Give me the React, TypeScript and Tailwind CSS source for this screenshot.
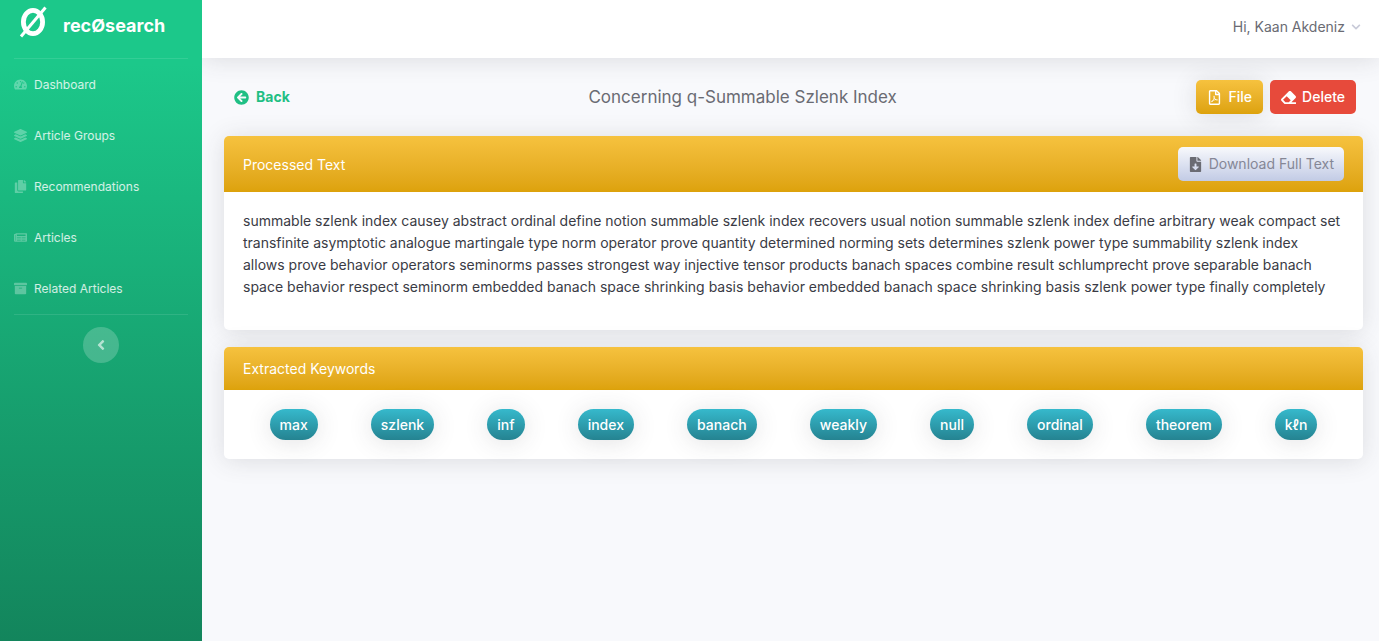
import React from 'react';
import {
  FaTachometerAlt,
  FaLayerGroup,
  FaCopy,
  FaNewspaper,
  FaArchive,
  FaAngleLeft,
  FaChevronDown,
  FaArrowCircleLeft,
  FaRegFilePdf,
  FaEraser,
  FaFileDownload,
} from 'react-icons/fa';

const navItems = [
  { label: 'Dashboard', icon: FaTachometerAlt },
  { label: 'Article Groups', icon: FaLayerGroup },
  { label: 'Recommendations', icon: FaCopy },
  { label: 'Articles', icon: FaNewspaper },
  { label: 'Related Articles', icon: FaArchive },
];

const keywords = ['max', 'szlenk', 'inf', 'index', 'banach', 'weakly', 'null', 'ordinal', 'theorem', 'kℓn'];

const processedText =
  'summable szlenk index causey abstract ordinal define notion summable szlenk index recovers usual notion summable szlenk index define arbitrary weak compact set transfinite asymptotic analogue martingale type norm operator prove quantity determined norming sets determines szlenk power type summability szlenk index allows prove behavior operators seminorms passes strongest way injective tensor products banach spaces combine result schlumprecht prove separable banach space behavior respect seminorm embedded banach space shrinking basis behavior embedded banach space shrinking basis szlenk power type finally completely';

function Logo() {
  return (
    <svg viewBox="0 0 28 32" className="h-8 w-7" fill="none" stroke="white" aria-hidden="true">
      <ellipse cx="14" cy="16" rx="9.6" ry="11.6" strokeWidth="4.8" />
      <path d="M2 30.5 26.5 1.5" strokeWidth="3" />
    </svg>
  );
}

function Sidebar() {
  return (
    <aside className="z-10 flex w-[202px] shrink-0 flex-col bg-linear-to-b from-[#1cc88a] from-10% to-[#13855c] px-3.5">
      <a href="#home" className="flex h-[58px] items-start gap-4 pt-1.5 pl-[5px] text-white">
        <Logo />
        <span className="pt-2 text-lg leading-6 font-bold">recØsearch</span>
      </a>
      <nav className="flex flex-col border-y border-white/10">
        {navItems.map(({ label, icon: Icon }) => (
          <a
            key={label}
            href={'#' + label.toLowerCase().replace(' ', '-')}
            className="flex h-[51px] items-center gap-[7px] text-xs text-white/80"
          >
            <Icon className="h-[13px] w-auto shrink-0 text-white/30" />
            {label}
          </a>
        ))}
      </nav>
      <button
        type="button"
        aria-label="Collapse sidebar"
        className="mt-3 flex size-9 items-center justify-center self-center rounded-full bg-white/20 text-white/60"
      >
        <FaAngleLeft className="size-4" />
      </button>
    </aside>
  );
}

function Card({ title, action, children }: { title: string; action?: React.ReactNode; children: React.ReactNode }) {
  return (
    <section className="rounded-[5px] bg-white shadow-[0_2px_25px_rgba(58,59,69,0.15)]">
      <header className="flex items-center justify-between rounded-t-[5px] bg-linear-to-b from-[#f6c23e] to-[#dda20a] px-[19px] py-[11px] text-sm text-white">
        <h2 className="leading-[21px]">{title}</h2>
        {action}
      </header>
      {children}
    </section>
  );
}

export default function App() {
  return (
    <div className="flex min-h-screen bg-[#f8f9fc] font-['Inter','Noto_Sans',sans-serif] text-sm">
      <Sidebar />
      <div className="flex min-w-0 flex-1 flex-col">
        <header className="flex h-[58px] items-center justify-end bg-white px-[18px] pb-1 shadow-[0_2px_25px_rgba(58,59,69,0.15)]">
          <button type="button" className="flex items-center gap-1.5 text-sm text-[#6a6b73]">
            Hi, Kaan Akdeniz
            <FaChevronDown className="size-2.5 text-[#c8cad8]" />
          </button>
        </header>
        <main className="flex flex-col gap-[17px] pt-[22px] pr-4 pb-6 pl-[22px]">
          <div className="mb-[5px] flex items-center justify-between pr-[7px] pl-2.5">
            <a href="#back" className="flex items-center gap-[7px] font-bold text-[#1fbf84]">
              <FaArrowCircleLeft className="size-[15px]" />
              Back
            </a>
            <h1 className="text-[17px] text-[#6a6b73]">Concerning q-Summable Szlenk Index</h1>
            <div className="flex gap-[7px] font-medium text-white">
              <button
                type="button"
                className="flex h-[34px] shrink-0 items-center gap-[7px] rounded-[5px] bg-linear-to-b from-[#f6c23e] to-[#dda20a] px-[11px] shadow-[0_2px_25px_rgba(58,59,69,0.15)]"
              >
                <FaRegFilePdf className="h-[15px] w-auto" />
                File
              </button>
              <button
                type="button"
                className="flex h-[34px] shrink-0 items-center gap-1.5 rounded-[5px] bg-[#e74a3b] px-[11px]"
              >
                <FaEraser className="size-[15px]" />
                Delete
              </button>
            </div>
          </div>
          <Card
            title="Processed Text"
            action={
              <button
                type="button"
                className="flex h-[34px] items-center gap-1.5 rounded-[5px] bg-linear-to-b from-[#f8f9fc] to-[#c2cbe5] px-2.5 text-[#858796]"
              >
                <FaFileDownload className="h-[15px] w-auto text-[#6a6b73]" />
                Download Full Text
              </button>
            }
          >
            <p className="pt-[18px] pr-5 pb-8 pl-[19px] leading-[22px] text-[#3a3b45]">{processedText}</p>
          </Card>
          <Card title="Extracted Keywords">
            <ul className="flex justify-around p-[19px]">
              {keywords.map((word) => (
                <li
                  key={word}
                  className="flex h-[31px] items-center rounded-full bg-linear-to-b from-[#36b9cc] to-[#258391] px-2.5 font-medium text-white shadow-[0_2px_25px_rgba(58,59,69,0.15)]"
                >
                  {word}
                </li>
              ))}
            </ul>
          </Card>
        </main>
      </div>
    </div>
  );
}
